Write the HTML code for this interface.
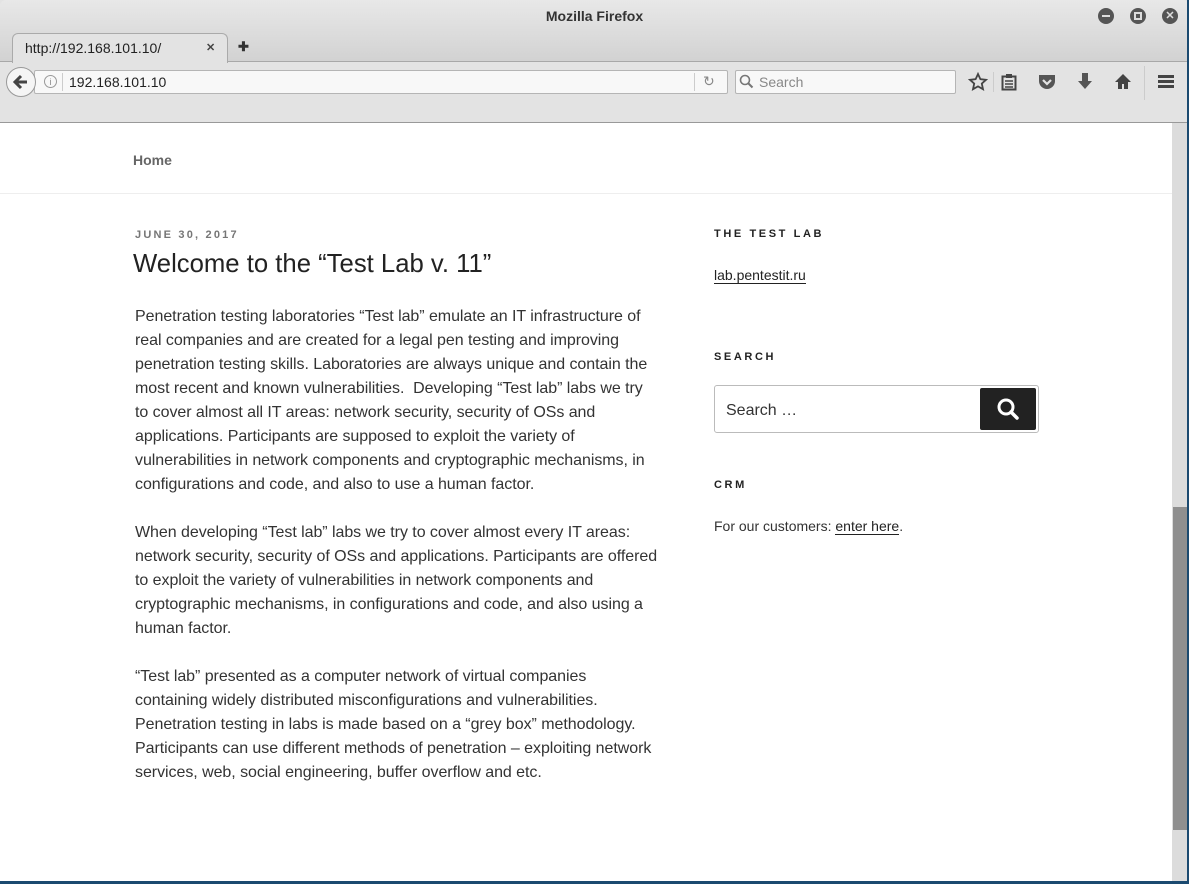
<!DOCTYPE html>
<html><head><meta charset="utf-8"><style>
*{margin:0;padding:0;box-sizing:border-box}
body{width:1189px;height:884px;overflow:hidden;background:#fff;font-family:"Liberation Sans",sans-serif;position:relative}
.abs{position:absolute}
#chrome{left:0;top:0;width:1189px;height:123px;background:#e3e3e3}
#title{left:0;top:0;width:1189px;height:61px;background:linear-gradient(#e8e8e8,#d2d2d2);border-radius:6px 6px 0 0}
#tt{left:0;top:8px;width:1189px;text-align:center;font-size:14px;color:#333;font-weight:bold}
.wb{width:16px;height:16px;border-radius:50%;background:#555;top:8px}
#tab{left:12px;top:33px;width:216px;height:30px;background:#e3e3e3;border:1px solid #aaa;border-bottom:none;border-radius:6px 6px 0 0}
#navline{left:0;top:61px;width:1189px;height:1px;background:#a8a8a8}
#url{left:34px;top:70px;width:694px;height:24px;background:#f8f8f8;border:1px solid #b5b5b5;border-radius:2px}
#back{left:6px;top:67px;width:30px;height:30px;border-radius:50%;background:#f5f5f5;border:1px solid #999}
#search{left:735px;top:70px;width:221px;height:24px;background:#f8f8f8;border:1px solid #b5b5b5;border-radius:2px}
#chromebot{left:0;top:122px;width:1189px;height:1px;background:#999}
.t16{font-size:16px;line-height:24px;color:#333;white-space:nowrap;letter-spacing:-0.05px}
.wt{font-size:11px;font-weight:bold;letter-spacing:2.6px;color:#222}
a{color:#222;text-decoration:none;border-bottom:1px solid #222}
</style></head><body>
<div id="chrome" class="abs"></div>
<div id="title" class="abs"></div>
<div id="tt" class="abs">Mozilla Firefox</div>
<div class="abs wb" style="left:1098px"><div style="position:absolute;left:4px;top:7px;width:8px;height:2px;background:#ddd"></div></div>
<div class="abs wb" style="left:1130px"><div style="position:absolute;left:4px;top:4px;width:8px;height:8px;border:2px solid #ddd"></div></div>
<div class="abs wb" style="left:1162px;color:#ddd;font-size:11px;text-align:center;line-height:16px;font-weight:bold">✕</div>
<div id="navline" class="abs"></div>
<div id="tab" class="abs"></div>
<div class="abs" style="left:25px;top:40px;font-size:14px;color:#222">http://192.168.101.10/</div>
<div class="abs" style="left:206px;top:41px;font-size:11px;color:#444;font-weight:bold">✕</div>
<div class="abs" style="left:238px;top:39px;font-size:13px;color:#333;font-weight:bold">✚</div>
<div id="url" class="abs"></div>
<div id="back" class="abs"><svg width="28" height="28" viewBox="0 0 28 28"><path d="M20 14H9M14 8l-6 6 6 6" stroke="#444" stroke-width="3" fill="none"/></svg></div>
<div class="abs" style="left:44px;top:75px;width:13px;height:13px;border:1px solid #999;border-radius:50%;font-size:9px;color:#888;text-align:center;line-height:12px">i</div>
<div class="abs" style="left:62px;top:73px;width:1px;height:18px;background:#ccc"></div>
<div class="abs" style="left:69px;top:74px;font-size:14px;color:#222">192.168.101.10</div>
<div class="abs" style="left:694px;top:73px;width:1px;height:18px;background:#ccc"></div>
<div class="abs" style="left:703px;top:73px;font-size:14px;color:#888">↻</div>
<div id="search" class="abs"></div>
<svg class="abs" style="left:739px;top:74px" width="16" height="16"><circle cx="6" cy="6" r="4.5" stroke="#777" stroke-width="1.6" fill="none"/><path d="M9.5 9.5l4 4" stroke="#777" stroke-width="2"/></svg>
<div class="abs" style="left:759px;top:74px;font-size:14px;color:#888">Search</div>
<svg class="abs" style="left:968px;top:72px" width="20" height="20"><path d="M10 2l2.4 5.2 5.6.6-4.2 3.8 1.2 5.6L10 14.4 5 17.2l1.2-5.6L2 7.8l5.6-.6z" fill="none" stroke="#444" stroke-width="1.8"/></svg>
<div class="abs" style="left:993px;top:72px;width:1px;height:20px;background:#ccc"></div>
<svg class="abs" style="left:1001px;top:73px" width="16" height="18"><rect x="1.5" y="3.5" width="13" height="13" fill="none" stroke="#444" stroke-width="2"/><rect x="5" y="1" width="6" height="4" fill="#444"/><path d="M4 8h8M4 11h8M4 14h8" stroke="#444" stroke-width="1.5"/></svg>
<svg class="abs" style="left:1038px;top:74px" width="18" height="16"><path d="M1 1h16v6a8 8 0 0 1-16 0z" fill="#555"/><path d="M5 6l4 4 4-4" stroke="#e3e3e3" stroke-width="2.2" fill="none"/></svg>
<svg class="abs" style="left:1077px;top:73px" width="16" height="18"><path d="M5 0h6v8h4l-7 8-7-8h4z" fill="#555"/></svg>
<svg class="abs" style="left:1114px;top:73px" width="18" height="17"><path d="M9 1L1 9h3v7h4v-5h2v5h4V9h3z" fill="#444"/></svg>
<div class="abs" style="left:1144px;top:66px;width:1px;height:34px;background:#ccc"></div>
<div class="abs" style="left:1158px;top:75px;width:16px;height:3px;background:#444;box-shadow:0 5px 0 #444,0 10px 0 #444"></div>
<div id="chromebot" class="abs"></div>

<div class="abs" style="left:1172px;top:123px;width:15px;height:758px;background:#dcdcdc"></div>
<div class="abs" style="left:1173px;top:507px;width:14px;height:323px;background:#8f8f8f"></div>
<div class="abs" style="left:1187px;top:0;width:2px;height:884px;background:#1b4a70"></div>
<div class="abs" style="left:0;top:881px;width:1189px;height:3px;background:#1b4a70"></div>

<div class="abs" style="left:133px;top:152px;font-size:14px;font-weight:bold;color:#666">Home</div>
<div class="abs" style="left:0;top:193px;width:1172px;height:1px;background:#eee"></div>
<div class="abs" style="left:135px;top:229px;font-size:11px;font-weight:bold;letter-spacing:2.2px;color:#767676">JUNE 30, 2017</div>
<div class="abs" style="left:133px;top:250px;font-size:25.7px;color:#222;white-space:nowrap">Welcome to the “Test Lab v. 11”</div>
<div class="abs t16" style="left:135px;top:305px">Penetration testing laboratories “Test lab” emulate an IT infrastructure of<br>real companies and are created for a legal pen testing and improving<br>penetration testing skills. Laboratories are always unique and contain the<br>most recent and known vulnerabilities.&nbsp; Developing “Test lab” labs we try<br>to cover almost all IT areas: network security, security of OSs and<br>applications. Participants are supposed to exploit the variety of<br>vulnerabilities in network components and cryptographic mechanisms, in<br>configurations and code, and also to use a human factor.</div>
<div class="abs t16" style="left:135px;top:521px">When developing “Test lab” labs we try to cover almost every IT areas:<br>network security, security of OSs and applications. Participants are offered<br>to exploit the variety of vulnerabilities in network components and<br>cryptographic mechanisms, in configurations and code, and also using a<br>human factor.</div>
<div class="abs t16" style="left:135px;top:665px">“Test lab” presented as a computer network of virtual companies<br>containing widely distributed misconfigurations and vulnerabilities.<br>Penetration testing in labs is made based on a “grey box” methodology.<br>Participants can use different methods of penetration – exploiting network<br>services, web, social engineering, buffer overflow and etc.</div>

<div class="abs wt" style="left:714px;top:228px">THE TEST LAB</div>
<div class="abs" style="left:714px;top:267px;font-size:14px;color:#222"><a>lab.pentestit.ru</a></div>
<div class="abs wt" style="left:714px;top:351px">SEARCH</div>
<div class="abs" style="left:714px;top:385px;width:325px;height:48px;border:1px solid #bbb;border-radius:3px"></div>
<div class="abs" style="left:726px;top:402px;font-size:16px;color:#333">Search …</div>
<div class="abs" style="left:980px;top:388px;width:56px;height:42px;background:#222;border-radius:2px"><svg width="56" height="42"><circle cx="26" cy="19" r="7" stroke="#fff" stroke-width="3" fill="none"/><path d="M31 24l6 6" stroke="#fff" stroke-width="3.5" stroke-linecap="round"/></svg></div>
<div class="abs wt" style="left:714px;top:479px">CRM</div>
<div class="abs" style="left:714px;top:518px;font-size:14px;color:#333">For our customers: <a>enter here</a>.</div>
</body></html>
